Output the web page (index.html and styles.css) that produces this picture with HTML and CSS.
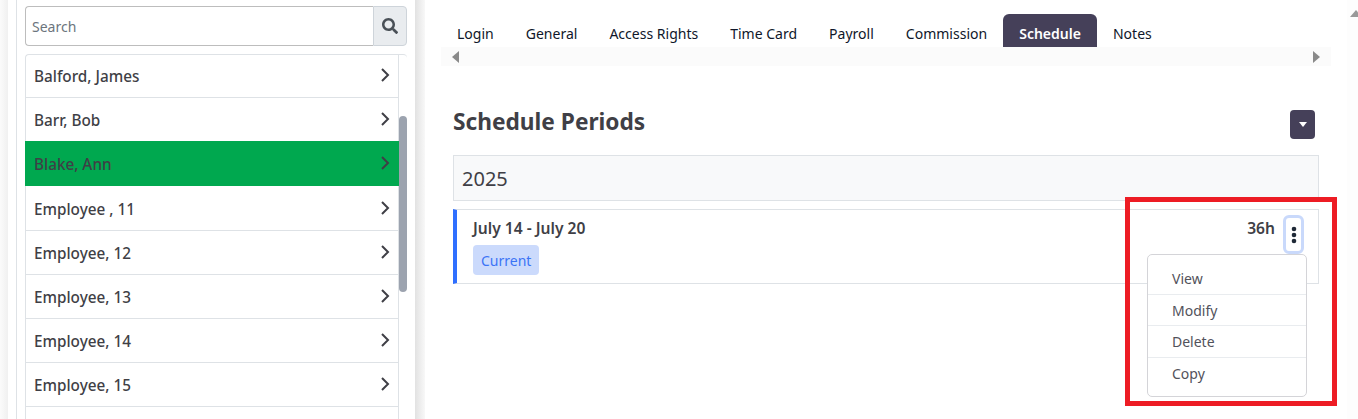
FILE: index.html
```html
<!DOCTYPE html>
<html lang="en">
<head>
    <meta charset="UTF-8">
    <title>Schedule Periods</title>
    <link rel="stylesheet" href="styles.css">
</head>
<body>
<div class="page">
    <div class="left-panel">
        <div class="left-card">
            <div class="left-body">
                <div class="search">
                    <input class="search-input" type="text" placeholder="Search">
                    <span class="search-btn">
                        <svg width="16" height="16" viewBox="0 0 512 512"><path fill="#495057" d="M505 442.700L405.300 343c-4.500-4.500-10.600-7-17-7H372c27.600-35.300 44-79.700 44-128C416 93.100 322.900 0 208 0S0 93.100 0 208s93.100 208 208 208c48.300 0 92.700-16.400 128-44v16.300c0 6.400 2.500 12.500 7 17l99.700 99.700c9.400 9.400 24.600 9.400 33.900 0l28.300-28.300c9.400-9.400 9.400-24.600.1-34zM208 336c-70.700 0-128-57.200-128-128 0-70.700 57.200-128 128-128 70.700 0 128 57.200 128 128 0 70.700-57.200 128-128 128z"/></svg>
                    </span>
                </div>
                <div class="emp-list">
                    <div class="emp-rows">
                        <div class="emp-row short"><span>Balford, James</span><svg class="chev" viewBox="0 0 10 16"><path d="M2 2l6 6-6 6"/></svg></div>
                        <div class="emp-row short no-line"><span>Barr, Bob</span><svg class="chev" viewBox="0 0 10 16"><path d="M2 2l6 6-6 6"/></svg></div>
                        <div class="emp-row tall active"><span>Blake, Ann</span><svg class="chev" viewBox="0 0 10 16"><path d="M2 2l6 6-6 6"/></svg></div>
                        <div class="emp-row tall"><span>Employee , 11</span><svg class="chev" viewBox="0 0 10 16"><path d="M2 2l6 6-6 6"/></svg></div>
                        <div class="emp-row"><span>Employee, 12</span><svg class="chev" viewBox="0 0 10 16"><path d="M2 2l6 6-6 6"/></svg></div>
                        <div class="emp-row"><span>Employee, 13</span><svg class="chev" viewBox="0 0 10 16"><path d="M2 2l6 6-6 6"/></svg></div>
                        <div class="emp-row"><span>Employee, 14</span><svg class="chev" viewBox="0 0 10 16"><path d="M2 2l6 6-6 6"/></svg></div>
                        <div class="emp-row"><span>Employee, 15</span><svg class="chev" viewBox="0 0 10 16"><path d="M2 2l6 6-6 6"/></svg></div>
                    </div>
                    <div class="scroll-track"><div class="scroll-thumb"></div></div>
                </div>
            </div>
        </div>
    </div>

    <div class="right-panel">
        <div class="tabs">
            <a class="tab">Login</a>
            <a class="tab">General</a>
            <a class="tab">Access Rights</a>
            <a class="tab">Time Card</a>
            <a class="tab">Payroll</a>
            <a class="tab">Commission</a>
            <a class="tab selected">Schedule</a>
            <a class="tab">Notes</a>
        </div>
        <div class="tab-scroll">
            <span class="arrow arrow-left"></span>
            <span class="arrow arrow-right"></span>
        </div>

        <div class="section-head">
            <h2>Schedule Periods</h2>
            <button class="caret-btn"><span class="caret"></span></button>
        </div>

        <div class="year">2025</div>

        <div class="period">
            <div class="period-info">
                <div class="period-name">July 14 - July 20</div>
                <span class="badge">Current</span>
            </div>
            <div class="period-side">
                <span class="hours">36h</span>
                <button class="dots-btn">
                    <svg width="6" height="18" viewBox="0 0 6 18"><circle cx="3" cy="3" r="2.300"/><circle cx="3" cy="9" r="2.300"/><circle cx="3" cy="15" r="2.300"/></svg>
                </button>
            </div>
            <ul class="menu">
                <li>View</li>
                <li>Modify</li>
                <li>Delete</li>
                <li>Copy</li>
            </ul>
        </div>
        <div class="highlight"></div>
    </div>

    <div class="page-scroll"><span class="page-scroll-up"></span></div>
</div>
</body>
</html>
```

FILE: styles.css
```css
* {
    box-sizing: border-box;
}

body {
    margin: 0;
    background: #fff;
    color: #3f3f46;
    font-family: "Noto Sans", sans-serif;
    font-size: 14px;
}

.page {
    display: flex;
    height: 419px;
    overflow: hidden;
}

/* employee list on the left */
.left-panel {
    flex-shrink: 0;
    width: 425px;
    padding: 0 10px 0 8px;
    background: linear-gradient(90deg, #fbfbfb 0, #f0f0f0 8px, #fff 8px, #fff 415px, #e2e2e2 415px, #f8f8f8 425px);
}

.left-card {
    height: 100%;
    padding: 0 8px;
    background: #fff;
}

.left-body {
    height: 100%;
    padding: 6px 0 0 8px;
    border-left: 1px solid #dee2e6;
}

.search {
    display: flex;
    height: 40px;
    margin-bottom: 8px;
}

.search-input {
    flex: 1;
    min-width: 0;
    padding: 0 6px;
    border: 1px solid #bdbdbd;
    border-right: 0;
    border-radius: 4px 0 0 4px;
    font-family: inherit;
    font-size: 14px;
    outline: none;
}

.search-input::placeholder {
    color: #6c757d;
}

.search-btn {
    display: flex;
    align-items: center;
    justify-content: center;
    width: 34px;
    background: #e9ecef;
    border: 1px solid #ced4da;
    border-radius: 0 4px 4px 0;
}

.emp-list {
    display: flex;
    height: 365px;
    border-top: 1px solid #dee2e6;
    border-left: 1px solid #dee2e6;
    border-radius: 4px 4px 0 0;
}

.emp-rows {
    flex: 1;
    min-width: 0;
    border-right: 1px solid #dee2e6;
}

.emp-row {
    display: flex;
    align-items: center;
    justify-content: space-between;
    height: 44px;
    padding: 0 8px;
    border-bottom: 1px solid #dee2e6;
    font-size: 15.300px;
    font-weight: 500;
}

.emp-row.short {
    height: 43px;
}

.emp-row.no-line {
    border-bottom: 0;
}

.emp-row.tall {
    height: 45px;
    padding-top: 1px;
}

.emp-row.active {
    margin: 0 -1px;
    padding: 1px 9px 0;
    background: #00a84f;
    border-bottom: 0;
}

.chev {
    width: 10px;
    height: 16px;
    margin-top: -2px;
}

.chev path {
    fill: none;
    stroke: #3f3f46;
    stroke-width: 2;
}

.scroll-track {
    position: relative;
    width: 8px;
}

.scroll-thumb {
    position: absolute;
    top: 61px;
    left: 0;
    width: 8px;
    height: 176px;
    background: #9ca3af;
    border-radius: 4px;
}

/* right side */
.right-panel {
    position: relative;
    width: 922px;
    flex-shrink: 0;
    padding: 14px 16px 0;
}

.tabs {
    display: flex;
    height: 33px;
}

.tab {
    padding: 10px 16px 0;
    color: #0f172a;
    font-size: 14.030px;
    line-height: 20px;
}

.tab.selected {
    background: #454059;
    color: #fff;
    font-weight: 600;
    border-radius: 6px 6px 0 0;
}

.tab-scroll {
    display: flex;
    align-items: center;
    justify-content: space-between;
    height: 19px;
    padding: 0 11px;
    background: #fbfbfb;
}

.arrow {
    width: 0;
    height: 0;
    border-top: 6.500px solid transparent;
    border-bottom: 6.500px solid transparent;
}

.arrow-left {
    border-right: 7px solid #8a8a8a;
}

.arrow-right {
    border-left: 7px solid #8a8a8a;
}

.section-head {
    display: flex;
    align-items: flex-start;
    justify-content: space-between;
    margin: 44px 16px 0 12px;
    height: 29px;
}

h2 {
    margin: 0;
    color: #3f3f46;
    font-size: 22.700px;
    font-weight: 700;
    line-height: 24px;
}

.caret-btn {
    display: flex;
    align-items: center;
    justify-content: center;
    width: 25px;
    height: 29px;
    padding: 0;
    border: 0;
    border-radius: 4px;
    background: #454059;
}

.caret {
    width: 0;
    height: 0;
    border-left: 4.500px solid transparent;
    border-right: 4.500px solid transparent;
    border-top: 5px solid #fff;
}

.year {
    height: 46px;
    margin: 16px 12px 8px;
    padding: 0 8px;
    border: 1px solid #dee2e6;
    background: #f8f9fa;
    font-size: 20px;
    line-height: 46px;
}

.period {
    position: relative;
    display: flex;
    justify-content: space-between;
    height: 75px;
    margin: 0 12px;
    padding: 8px 14px 0 16px;
    border: 1px solid #dee2e6;
    border-left: 4px solid #2f6fff;
}

.period-name {
    font-size: 15.600px;
    font-weight: 600;
    line-height: 20px;
}

.badge {
    display: inline-block;
    height: 30px;
    margin-top: 7px;
    padding: 0 8px;
    background: #cbdafc;
    color: #3b74f6;
    border-radius: 4px;
    line-height: 31px;
}

.period-side {
    display: flex;
    align-items: flex-start;
    gap: 8px;
}

.hours {
    font-size: 15.600px;
    font-weight: 600;
    line-height: 20px;
}

.dots-btn {
    display: flex;
    align-items: center;
    justify-content: center;
    width: 21px;
    height: 39px;
    margin-top: -3px;
    padding: 0;
    border: 3px solid #c9d9fb;
    border-radius: 6px;
    background: #fff;
}

.dots-btn svg {
    fill: #1f2937;
}

.menu {
    position: absolute;
    top: 44px;
    right: 11px;
    width: 160px;
    height: 143px;
    margin: 0;
    padding: 8px 0;
    list-style: none;
    background: #fff;
    border: 1px solid #d4d4d8;
    border-radius: 5px;
}

.menu li {
    height: 31.500px;
    padding: 0 24px;
    color: #52525b;
    line-height: 31px;
    border-bottom: 1px solid #e9ecef;
}

.menu li:last-child {
    border-bottom: 0;
}

/* red box drawn over the screenshot */
.highlight {
    position: absolute;
    top: 197px;
    left: 700px;
    width: 212px;
    height: 209px;
    border: 5px solid #ed1c24;
    pointer-events: none;
}

.page-scroll {
    position: relative;
    flex: 1;
    background: #fdfdfd;
}

.page-scroll-up {
    position: absolute;
    top: 10px;
    left: 3px;
    border-left: 6px solid transparent;
    border-right: 6px solid transparent;
    border-bottom: 7px solid #999;
}
```
